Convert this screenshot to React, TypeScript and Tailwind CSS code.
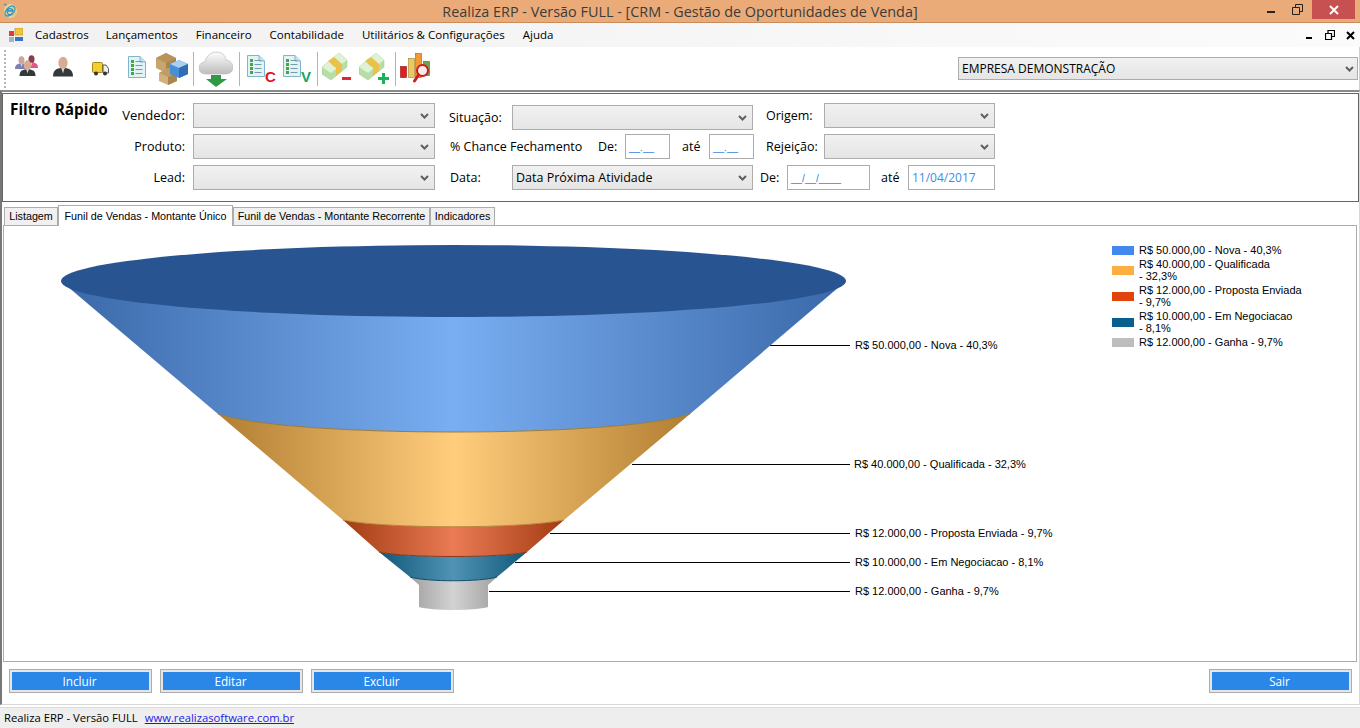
import React from 'react'

const Chevron = () => (
  <svg width="9" height="6" viewBox="0 0 9 6" className="shrink-0">
    <path d="M1 1 L4.5 4.5 L8 1" fill="none" stroke="#5f5f5f" strokeWidth="2" />
  </svg>
)

const Combo = ({ w, text, className = '' }: { w: string; text?: string; className?: string }) => (
  <div className={`${w} ${className} h-[25px] shrink-0 flex items-center justify-between pl-[3px] pr-[5px] border border-[#acacac] bg-gradient-to-b from-[#f1f1f1] to-[#e5e5e5] text-black`}>
    <span className="pt-px">{text}</span>
    <Chevron />
  </div>
)

const Field = ({ w, text, mask }: { w: string; text: string; mask?: boolean }) => (
  <div className={`${w} h-[25px] shrink-0 flex items-center px-[3px] border border-[#acacac] bg-white ${mask ? 'text-[#2a7fe0] text-[10px] pt-[2px] font-["Liberation_Sans",sans-serif]' : 'text-[#3b8de8] text-[12px]'}`}>
    {text}
  </div>
)

const Label = ({ w, ml, right, children }: { w: string; ml?: string; right?: boolean; children: React.ReactNode }) => (
  <div className={`${w} ${ml ?? ''} ${right ? 'text-right' : ''} shrink-0 text-[12.5px] leading-[26px] text-black whitespace-nowrap`}>{children}</div>
)

const Sep = ({ ml }: { ml: string }) => <div className={`${ml} w-px h-[34px] bg-[#b4b4b4] shrink-0`} />

const Bust = ({ x, y, s = 1, skin = '#d9ab92', body = '#33393b' }: { x: number; y: number; s?: number; skin?: string; body?: string }) => (
  <g transform={`translate(${x} ${y}) scale(${s})`}>
    <path d="M0 20 C0 14 3 11.5 10 11.5 C17 11.5 20 14 20 20 Z" fill={body} />
    <ellipse cx="10" cy="6.5" rx="4.6" ry="6.2" fill={skin} />
    <path d="M8.5 12 L10 17 L11.5 12 Z" fill="#cfd6d6" />
  </g>
)

const People = () => (
  <svg width="23" height="22" viewBox="0 0 23 22" className="ml-[9px] mb-[5px] shrink-0">
    <Bust x={0} y={1} s={0.65} skin="#c9a79a" body="#7d7fb5" />
    <Bust x={10} y={0} s={0.65} skin="#8c3c48" body="#e2568c" />
    <Bust x={4.5} y={5} s={0.8} />
  </svg>
)

const Person = () => (
  <svg width="20" height="21" viewBox="0 0 20 21" className="ml-[15px] mb-[5px] shrink-0">
    <Bust x={0} y={0.5} />
  </svg>
)

const Truck = () => (
  <svg width="17" height="14" viewBox="0 0 17 14" className="ml-[19px] shrink-0">
    <rect x="0.5" y="0.5" width="10" height="10" rx="1" fill="#f2cf2e" stroke="#a58a1a" />
    <path d="M11 3 H14 L16.5 6.5 V11 H11 Z" fill="#eee" stroke="#555" />
    <circle cx="4" cy="11.5" r="2" fill="#333" />
    <circle cx="13" cy="11.5" r="2" fill="#333" />
  </svg>
)

const Doc = ({ className = '' }: { className?: string }) => (
  <svg width="18" height="22" viewBox="0 0 18 22" className={`${className} shrink-0`}>
    <path d="M0.5 0.5 H12 L17.5 6 V21.5 H0.5 Z" fill="#e2f3f8" stroke="#7fb6cb" />
    <path d="M12 0.5 V6 H17.5" fill="#c4e3ee" stroke="#7fb6cb" />
    {[4, 8, 12, 16].map((y) => (
      <g key={y}>
        <rect x="3" y={y} width="3" height="3" fill="#43a843" />
        <rect x="7.5" y={y + 1} width="7" height="1" fill="#7b9aa8" />
      </g>
    ))}
  </svg>
)

const DocLetter = ({ letter, color, className }: { letter: string; color: string; className: string }) => (
  <div className={`${className} relative w-[30px] h-[30px] shrink-0`}>
    <Doc className="absolute left-0 top-[1px]" />
    <span className="absolute left-[18px] top-[14px] text-[15px] font-bold leading-[18px] font-['Liberation_Sans',sans-serif]" style={{ color }}>{letter}</span>
  </div>
)

const Boxes = () => (
  <svg width="32" height="32" viewBox="0 0 32 32" className="ml-[10px] shrink-0">
    <path d="M0 5 L10 0 L20 5 V15 L10 20 L0 15 Z" fill="#c9a56c" />
    <path d="M0 5 L10 10 L20 5 L10 0 Z" fill="#b8935c" />
    <path d="M10 10 V20 L20 15 V5 Z" fill="#a9864f" />
    <path d="M3 20 L12 15 L21 20 V28 L12 32 L3 28 Z" fill="#d2b27c" />
    <path d="M3 20 L12 24 L21 20 L12 15 Z" fill="#bf9c66" />
    <path d="M12 24 V32 L21 28 V20 Z" fill="#a9864f" />
    <path d="M14 11 L23 7 L32 11 V21 L23 25 L14 21 Z" fill="#4a8fd6" />
    <path d="M14 11 L23 15 L32 11 L23 7 Z" fill="#a8d0f0" />
    <path d="M23 15 V25 L32 21 V11 Z" fill="#2f6db5" />
  </svg>
)

const Cloud = () => (
  <svg width="34" height="36" viewBox="0 0 34 36" className="ml-[5px] shrink-0">
    <defs>
      <linearGradient id="cl" x1="0" y1="0" x2="0" y2="1">
        <stop offset="0" stopColor="#fdfdfd" />
        <stop offset="1" stopColor="#bdbdbd" />
      </linearGradient>
    </defs>
    <path d="M7 23 C2 23 0 20 0 17 C0 13 3 11 6 11 C7 5 12 1 17 1 C23 1 26 4 27 9 C31 9 34 13 34 16 C34 20 31 23 27 23 Z" fill="url(#cl)" stroke="#bbb" strokeWidth="0.7" />
    <path d="M12 24 H22 V28 H28 L17 36 L7 28 H12 Z" fill="#2f9a46" />
  </svg>
)

const Money = ({ sign, className }: { sign: '-' | '+'; className: string }) => (
  <svg width="32" height="31" viewBox="0 0 32 31" className={`${className} shrink-0`}>
    <path d="M0 14 L17 0 L25 7 V14 L9 27 L0 21 Z" fill="#b7dfa5" stroke="#9cc78c" strokeWidth="0.5" />
    <path d="M0 14 L9 20 L25 7 L17 0 Z" fill="#dff2d3" />
    <circle cx="12.5" cy="10" r="3" fill="#a6d592" />
    <path d="M6 8 L12 4 L20 11 V18 L14 23 V15 Z" fill="#e8c24a" />
    {sign === '-' ? <rect x="20" y="24" width="9" height="3" fill="#e4262c" /> : <path d="M23 20 H26 V24 H30 V27 H26 V31 H23 V27 H19 V24 H23 Z" fill="#19b35c" />}
  </svg>
)

const Bars = () => (
  <svg width="32" height="31" viewBox="0 0 32 31" className="ml-[4px] shrink-0">
    <rect x="0.5" y="13.5" width="6" height="11" fill="#e21d1d" stroke="#8c1414" strokeWidth="0.6" />
    <rect x="8.5" y="5.5" width="6" height="19" fill="#efc75c" stroke="#9b8033" strokeWidth="0.6" />
    <rect x="15.5" y="0.5" width="6" height="24" fill="#ef9a37" stroke="#a3621a" strokeWidth="0.6" />
    <rect x="23.5" y="8.5" width="6" height="14" fill="#6da64a" stroke="#47702d" strokeWidth="0.6" />
    <circle cx="22.5" cy="17.5" r="5.5" fill="#f6ecec" stroke="#cc1e1e" strokeWidth="2" />
    <path d="M18.5 22 L14.5 28" stroke="#cc1e1e" strokeWidth="3" strokeLinecap="round" />
  </svg>
)

const FunnelChart = () => (
  <svg width="1352" height="435" viewBox="4 226 1352 435" className="block">
    <defs>
      <linearGradient id="gBlue" x1="0" x2="1" y1="0" y2="0">
        <stop offset="0" stopColor="#3a68a8" />
        <stop offset="0.5" stopColor="#79aef2" />
        <stop offset="1" stopColor="#3a68a8" />
      </linearGradient>
      <linearGradient id="gYellow" x1="0" x2="1" y1="0" y2="0">
        <stop offset="0" stopColor="#b27e32" />
        <stop offset="0.5" stopColor="#ffcd7c" />
        <stop offset="1" stopColor="#b27e32" />
      </linearGradient>
      <linearGradient id="gOrange" x1="0" x2="1" y1="0" y2="0">
        <stop offset="0" stopColor="#a33c12" />
        <stop offset="0.5" stopColor="#ea7b54" />
        <stop offset="1" stopColor="#a33c12" />
      </linearGradient>
      <linearGradient id="gTeal" x1="0" x2="1" y1="0" y2="0">
        <stop offset="0" stopColor="#11587a" />
        <stop offset="0.5" stopColor="#5093b4" />
        <stop offset="1" stopColor="#11587a" />
      </linearGradient>
      <linearGradient id="gGray" x1="0" x2="1" y1="0" y2="0">
        <stop offset="0" stopColor="#a0a0a0" />
        <stop offset="0.5" stopColor="#d3d3d3" />
        <stop offset="1" stopColor="#a0a0a0" />
      </linearGradient>
    </defs>

    <g stroke="#000" strokeWidth="1" shapeRendering="crispEdges">
      <line x1="770" x2="850" y1="345.5" y2="345.5" />
      <line x1="632" x2="850" y1="464.5" y2="464.5" />
      <line x1="550" x2="850" y1="533.5" y2="533.5" />
      <line x1="515" x2="850" y1="562.5" y2="562.5" />
      <line x1="489" x2="850" y1="591.5" y2="591.5" />
    </g>

    <path d="M410 577 L419 585 V607 C432 611 475 611 488 607 V585 L497 577 C480 582 427 582 410 577 Z" fill="url(#gGray)" />
    <path d="M379 552 L410 577 C427 582 480 582 497 577 L527 552 C500 558 406 558 379 552 Z" fill="url(#gTeal)" />
    <path d="M343 520 L379 552 C406 558 500 558 527 552 L564 520 C520 529 387 529 343 520 Z" fill="url(#gOrange)" />
    <path d="M218 414 L343 520 C387 529 520 529 564 520 L690 414 C620 438 288 438 218 414 Z" fill="url(#gYellow)" />
    <path d="M61 281 L218 414 C288 438 620 438 690 414 L846 281 Z" fill="url(#gBlue)" />
    <ellipse cx="453.5" cy="281" rx="392.5" ry="36" fill="#285592" />
    <path d="M218 414 C288 438 620 438 690 414" fill="none" stroke="#9c7a3a" strokeWidth="1" />
    <path d="M343 520 C387 529 520 529 564 520" fill="none" stroke="#b8853a" strokeWidth="1" />
    <path d="M379 552 C406 558 500 558 527 552" fill="none" stroke="#8a3b18" strokeWidth="1" />
    <path d="M410 577 C427 582 480 582 497 577" fill="none" stroke="#0f4c6a" strokeWidth="1" />

    <g fontFamily="'Liberation Sans', sans-serif" fontSize="11" fill="#000">
      <text x="855" y="349">R$ 50.000,00 - Nova - 40,3%</text>
      <text x="854" y="468">R$ 40.000,00 - Qualificada - 32,3%</text>
      <text x="855" y="537">R$ 12.000,00 - Proposta Enviada - 9,7%</text>
      <text x="855" y="566">R$ 10.000,00 - Em Negociacao - 8,1%</text>
      <text x="855" y="595">R$ 12.000,00 - Ganha - 9,7%</text>
    </g>
  </svg>
)

const legend = [
  { color: 'bg-[#4189ee]', h: 'h-[14px]', lines: ['R$ 50.000,00 - Nova - 40,3%'] },
  { color: 'bg-[#fdb040]', h: 'h-[26px]', lines: ['R$ 40.000,00 - Qualificada', '- 32,3%'] },
  { color: 'bg-[#e2430c]', h: 'h-[26px]', lines: ['R$ 12.000,00 - Proposta Enviada', '- 9,7%'] },
  { color: 'bg-[#08608e]', h: 'h-[26px]', lines: ['R$ 10.000,00 - Em Negociacao', '- 8,1%'] },
  { color: 'bg-[#bdbdbd]', h: 'h-[14px]', lines: ['R$ 12.000,00 - Ganha - 9,7%'] },
]

const ActionButton = ({ label, className = '' }: { label: string; className?: string }) => (
  <div className={`${className} w-[143px] h-[24px] border border-[#acacac] bg-[#e6e6e6] p-[2px] shrink-0`}>
    <div className="h-full bg-[#2a87e8] flex items-center justify-center text-[11.75px] text-white pr-[2px] pt-px">{label}</div>
  </div>
)

export default function App() {
  return (
    <div className="w-[1360px] h-[728px] overflow-hidden flex flex-col bg-white font-['Open_Sans',sans-serif]">
      {/* barra de titulo */}
      <div className="h-[23px] shrink-0 flex items-start bg-[#ebab79] border-b border-[#c98c5c] relative">
        <svg width="16" height="17" viewBox="0 0 16 17" className="ml-[2px] mt-[2px] shrink-0">
          <ellipse cx="8.5" cy="9" rx="6.5" ry="7" fill="#dfd9a8" />
          <path d="M8 3 A6 6 0 0 1 14 9 L14 13 L10 15 Z" fill="#e6c28c" />
          <ellipse cx="8" cy="9" rx="6" ry="3.5" transform="rotate(-45 8 9)" fill="none" stroke="#2e9fb8" strokeWidth="1.4" />
          <path d="M5 9 H11 M11 9 A3 3 0 1 0 10 12" stroke="#2a8fd0" strokeWidth="1.3" fill="none" />
          <path d="M1 3 L4 1 L5 4 Z" fill="#7d8fa0" />
        </svg>
        <div className="absolute inset-x-0 top-0 text-center text-[14.4px] leading-[23px] text-[#3b3b3b] whitespace-nowrap">
          Realiza ERP - Versão FULL - [CRM - Gestão de Oportunidades de Venda]
        </div>
        <div className="ml-auto flex items-start shrink-0">
          <div className="w-[8px] h-[2px] mt-[11px] bg-[#222]" />
          <svg width="11" height="11" viewBox="0 0 11 11" className="ml-[17px] mt-[4px]">
            <path d="M0.5 3.5 H7.5 V10.5 H0.5 Z M3.5 3 V0.5 H10.5 V7.5 H8" fill="none" stroke="#222" />
          </svg>
          <div className="ml-[9px] mr-[5px] w-[43px] h-[19px] bg-[#c75050] flex items-center justify-center">
            <svg width="10" height="10" viewBox="0 0 10 10">
              <path d="M1 1 L9 9 M9 1 L1 9" stroke="#fff" strokeWidth="2" />
            </svg>
          </div>
        </div>
      </div>

      {/* menu */}
      <div className="h-[24px] shrink-0 flex items-center bg-gradient-to-r from-[#f1f1f1] to-[#fbfbfb] text-[11.5px] text-black">
        <svg width="14" height="14" viewBox="0 0 14 14" className="ml-[9px] shrink-0">
          <rect x="0" y="3" width="5" height="5" fill="#e33b2e" />
          <rect x="6" y="0" width="8" height="7" fill="#f5c33b" stroke="#b58a1c" strokeWidth="0.6" />
          <rect x="0" y="9" width="5" height="5" fill="#9fb4c8" />
          <rect x="6" y="9" width="8" height="4" fill="#3f6fc4" />
        </svg>
        <span className="ml-[12px]">Cadastros</span>
        <span className="ml-[17px]">Lançamentos</span>
        <span className="ml-[18px]">Financeiro</span>
        <span className="ml-[18px]">Contabilidade</span>
        <span className="ml-[18px]">Utilitários &amp; Configurações</span>
        <span className="ml-[18px]">Ajuda</span>
        <div className="ml-auto flex items-center shrink-0">
          <div className="w-[6px] h-[2px] mt-[6px] bg-black" />
          <svg width="10" height="10" viewBox="0 0 10 10" className="ml-[13px]">
            <path d="M0.5 3.5 H6.5 V9.5 H0.5 Z M3 3 V0.5 H9.5 V6.5 H7" fill="none" stroke="#000" strokeWidth="1.2" />
          </svg>
          <svg width="9" height="9" viewBox="0 0 9 9" className="ml-[11px] mr-[5px]">
            <path d="M1 1 L8 8 M8 1 L1 8" stroke="#000" strokeWidth="2" />
          </svg>
        </div>
      </div>

      {/* barra de ferramentas */}
      <div className="h-[43px] shrink-0 flex items-center bg-white border-r border-[#cfcfcf]">
        <div className="ml-[4px] w-[2px] h-[38px] shrink-0 border-l-2 border-dotted border-[#b5b5b5]" />
        <People />
        <Person />
        <Truck />
        <Doc className="ml-[19px] mb-[4px]" />
        <Boxes />
        <Sep ml="ml-[5px]" />
        <Cloud />
        <Sep ml="ml-[6px]" />
        <DocLetter letter="C" color="#e8141c" className="ml-[7px]" />
        <DocLetter letter="V" color="#12a860" className="ml-[6px]" />
        <Sep ml="ml-[4px]" />
        <Money sign="-" className="ml-[4px]" />
        <Money sign="+" className="ml-[5px]" />
        <Sep ml="ml-[4px]" />
        <Bars />
        <Combo w="w-[400px]" text="EMPRESA DEMONSTRAÇÃO" className="!h-[23px] ml-auto mr-px text-[12px] !pl-[3px] !pr-[3px]" />
      </div>

      {/* area do formulario */}
      <div className="h-[615px] shrink-0 flex flex-col border-t-2 border-[#8a8a8a] border-l-2 border-l-[#777] border-r border-r-[#d8d8d8] border-b border-b-[#d8d8d8] mb-[2px] pt-[1px]">
        <div className="h-[109px] shrink-0 border border-[#666] pt-[9px] flex flex-col gap-[6px]">
          <div className="flex h-[25px]">
            <div className="w-[182px] shrink-0 flex justify-between pl-[7px]">
              <span className="text-[15.3px] leading-[12px] font-bold text-black whitespace-nowrap">Filtro Rápido</span>
              <span className="text-[13px] leading-[25px] text-black">Vendedor:</span>
            </div>
            <Combo w="w-[242px]" className="ml-[8px]" />
            <Label w="w-[63px]" ml="ml-[14px] mt-[2px]">Situação:</Label>
            <Combo w="w-[241px]" className="mt-[2px]" />
            <Label w="w-[58px]" ml="ml-[13px]">Origem:</Label>
            <Combo w="w-[171px]" />
          </div>
          <div className="flex h-[25px]">
            <Label w="w-[182px]" right>Produto:</Label>
            <Combo w="w-[242px]" className="ml-[8px]" />
            <Label w="w-[148px]" ml="ml-[15px]">% Chance Fechamento</Label>
            <Label w="w-[27px]">De:</Label>
            <Field w="w-[45px]" text="__.__" mask />
            <Label w="w-[27px]" ml="ml-[12px]">até</Label>
            <Field w="w-[45px]" text="__.__" mask />
            <Label w="w-[58px]" ml="ml-[12px]">Rejeição:</Label>
            <Combo w="w-[171px]" />
          </div>
          <div className="flex h-[25px]">
            <Label w="w-[182px]" right>Lead:</Label>
            <Combo w="w-[242px]" className="ml-[8px]" />
            <Label w="w-[62px]" ml="ml-[15px]">Data:</Label>
            <Combo w="w-[241px]" text="Data Próxima Atividade" className="text-[12.5px]" />
            <Label w="w-[27px]" ml="ml-[7px]">De:</Label>
            <Field w="w-[83px]" text="__/__/____" mask />
            <Label w="w-[27px]" ml="ml-[11px]">até</Label>
            <Field w="w-[87px]" text="11/04/2017" />
          </div>
        </div>

        {/* abas */}
        <div className="h-[21px] mt-[3px] shrink-0 flex items-end pl-[2px] text-[10.75px] font-['Liberation_Sans',sans-serif] text-black whitespace-nowrap relative z-10">
          <div className="w-[54px] h-[18px] mb-[1px] flex items-center justify-center bg-[#f0f0f0] border border-[#acacac] border-b-0">Listagem</div>
          <div className="w-[175px] h-[21px] flex items-start pt-[2px] justify-center bg-white border border-[#acacac] border-b-0">Funil de Vendas - Montante Único</div>
          <div className="w-[197px] h-[18px] mb-[1px] flex items-center justify-center bg-[#f0f0f0] border border-[#acacac] border-b-0">Funil de Vendas - Montante Recorrente</div>
          <div className="w-[65px] h-[18px] mb-[1px] flex items-center justify-center bg-[#f0f0f0] border border-[#acacac] border-b-0">Indicadores</div>
        </div>
        <div className="h-[437px] w-[1354px] ml-px -mt-px shrink-0 border border-[#acacac] relative">
          <FunnelChart />
          <div className="absolute left-[1108px] top-[17px] flex flex-col font-['Liberation_Sans',sans-serif] text-[11px] leading-[12px] text-black whitespace-nowrap">
            {legend.map((row) => (
              <div key={row.lines[0]} className={`${row.h} flex items-center`}>
                <div className={`${row.color} w-[22px] h-[9px] shrink-0`} />
                <div className="ml-[5px]">
                  {row.lines.map((l) => (
                    <div key={l}>{l}</div>
                  ))}
                </div>
              </div>
            ))}
          </div>
        </div>

        {/* botoes */}
        <div className="flex mt-[7px] pl-[7px]">
          <ActionButton label="Incluir" />
          <ActionButton label="Editar" className="ml-[8px]" />
          <ActionButton label="Excluir" className="ml-[8px]" />
          <ActionButton label="Sair" className="ml-auto mr-[7px]" />
        </div>
      </div>

      {/* rodape */}
      <div className="flex-1 flex items-center bg-[#eeeeee] border-t border-[#dcdcdc] text-[11.25px] text-black pl-[4px] whitespace-nowrap">
        <span>Realiza ERP - Versão FULL</span>
        <a href="#" className="ml-[7px] text-[#1a1ae0] underline">www.realizasoftware.com.br</a>
      </div>
    </div>
  )
}
